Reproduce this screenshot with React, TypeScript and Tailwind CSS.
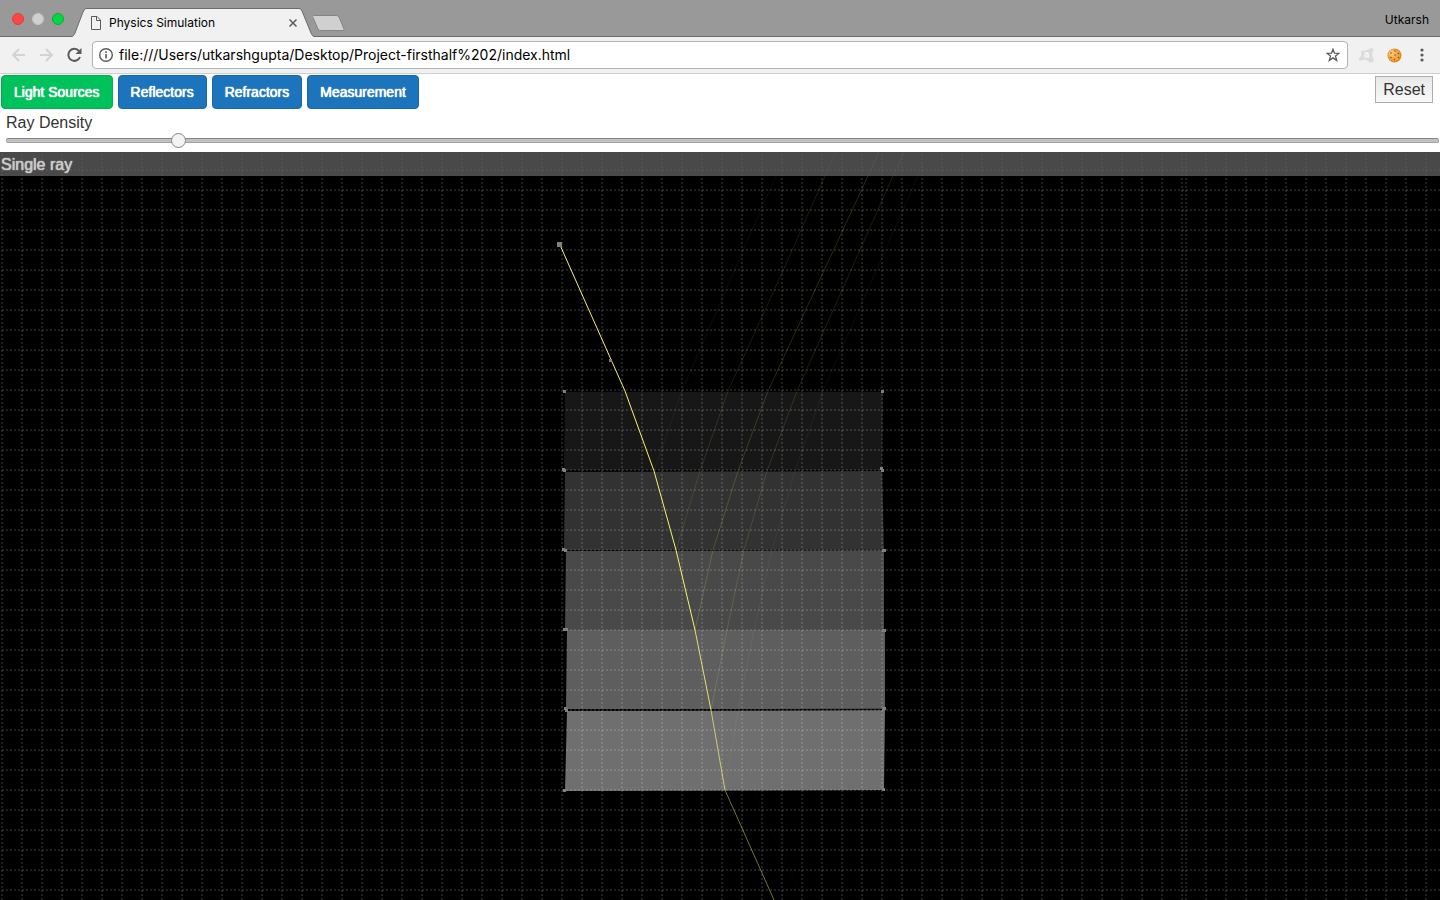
import { useState } from "react";

const GRID = 20;
const TILE = 1184;
const TOOLS = ["Light Sources", "Reflectors", "Refractors", "Measurement"];

const SLABS = [
  { points: "565,392 883,392 882,470 564,470", fill: "#171717" },
  { points: "565,472 882,471 884,550 564,550", fill: "#323232" },
  { points: "566,551 884,550 884,630 565,630", fill: "#494949" },
  { points: "567,630 885,630 885,709 566,709", fill: "#5e5e5e" },
  { points: "567,711 885,710 884,790 565,791", fill: "#6f6f6f" },
];

const RAYS = [
  { points: "560,245 625,391 654,471 676,550 695,630", color: "#ffff70", opacity: 0.95 },
  { points: "695,630 711,710", color: "#ffff70", opacity: 0.8 },
  { points: "711,710 725,790", color: "#ffff70", opacity: 0.65 },
  { points: "725,790 774,900 792,940", color: "#ffff70", opacity: 0.45 },
  { points: "654,471 682,391 740,257 776,176 787,152", color: "#ffff80", opacity: 0.05 },
  { points: "676,550 700,471 728,391 782,273 825,176 836,152", color: "#ffff80", opacity: 0.11 },
  { points: "695,630 713,550 738,471 768,391 868,176 879,152", color: "#ffff80", opacity: 0.16 },
  { points: "711,710 727,630 744,550 767,471 797,391 893,176 904,152", color: "#ffff80", opacity: 0.12 },
  { points: "725,790 738,710 754,630 772,550 795,471 823,391 918,176 929,152", color: "#ffff80", opacity: 0.05 },
  { points: "747,760 755,793 797,887", color: "#ffff80", opacity: 0.02 },
];

const HANDLES = [
  [563, 390], [881, 390], [562, 468], [563, 469], [880, 467], [881, 469],
  [562, 548], [564, 549], [882, 549], [883, 549], [563, 628], [565, 628],
  [882, 629], [883, 629], [564, 707], [565, 709], [883, 707], [882, 708],
  [563, 789], [882, 788], [609, 359],
];

function Bench() {
  const columns: number[] = [];
  for (let x = 2; x < 3840; x += 1) {
    if ((x % TILE) % GRID === 2) columns.push(x);
  }
  const rows = Array.from({ length: 100 }, (_, i) => 170 + i * GRID);
  return (
    <svg className="absolute inset-0 h-full w-full" role="img" aria-label="Light ray through stacked glass slabs">
      <g transform="translate(0 -152)">
        {SLABS.map((s) => (
          <polygon key={s.points} points={s.points} fill={s.fill} />
        ))}
        <g stroke="#000" strokeWidth="1">
          <line x1="566" x2="881" y1="470.500" y2="470.500" />
          <line x1="566" x2="882" y1="550.500" y2="550" strokeOpacity="0.6" />
          <line x1="567" x2="883" y1="710" y2="709.500" strokeWidth="1.500" />
        </g>
        <g stroke="#fff" strokeOpacity="0.13" strokeWidth="2" strokeDasharray="2 2">
          {columns.map((x) => (
            <line key={x} x1={x} x2={x} y1="154" y2="2160" />
          ))}
          {rows.map((y) => (
            <line key={y} x1="2" x2="3840" y1={y} y2={y} />
          ))}
        </g>
        <g fill="none">
          {RAYS.map((r) => (
            <polyline key={r.points} points={r.points} stroke={r.color} strokeOpacity={r.opacity} />
          ))}
        </g>
        <g fill="#808080">
          <rect x="557" y="242" width="5" height="5" />
          {HANDLES.map(([x, y]) => (
            <rect key={x + "-" + y} x={x} y={y} width="3" height="3" />
          ))}
        </g>
      </g>
    </svg>
  );
}

function TabStrip() {
  return (
    <header className="flex h-[37px] items-end border-b border-[#6c6c6c] bg-[#999]">
      <div className="flex h-full items-center gap-2 pt-px pl-3">
        <button aria-label="Close window" className="size-3 rounded-full border border-[#e33e3a] bg-[#fc4645]" />
        <button aria-label="Minimize window" className="size-3 rounded-full border border-[#c4c4c4] bg-[#d0d0d0]" />
        <button aria-label="Zoom window" className="size-3 rounded-full border border-[#12ac28] bg-[#00d742]" />
      </div>
      <div className="relative -mb-px ml-2 flex h-[29px] w-[242px] items-center pr-[17px] pl-[19px]">
        <svg className="absolute inset-0" width="242" height="29" viewBox="0 0 242 29" aria-hidden="true">
          <path d="M0 28.5 C1.5 28 2 27 3 25 L11 4 Q12.500 .5 14 .5 H227 Q229 .5 230 3 L239 25 Q240.500 28.500 242 28.500 V29 H0Z" fill="#f1f1f1" />
          <path d="M0 28.500 C1.500 28 2 27 3 25 L11 4 Q12.500 .5 14 .5 H227 Q229 .5 230 3 L239 25 Q240.500 28.500 242 28.500" fill="none" stroke="#6c6c6c" />
        </svg>
        <svg className="relative" width="10" height="14" viewBox="0 0 10 14" fill="none" stroke="#5a5a5a" aria-hidden="true">
          <path d="M.5 .5 H6 L9.500 4 V13.500 H.5Z M5.500 .5 V4.500 H9.500" />
        </svg>
        <span className="relative ml-2 flex-1 text-xs text-black">Physics Simulation</span>
        <button aria-label="Close tab" className="relative">
          <svg width="8" height="8" viewBox="0 0 8 8" stroke="#5a5a5a" strokeWidth="1.500" aria-hidden="true">
            <path d="M.5 .5 L7.500 7.500 M7.500 .5 L.5 7.500" />
          </svg>
        </button>
      </div>
      <button aria-label="New tab" className="-ml-px mb-1">
        <svg width="34" height="17" viewBox="0 0 34 17" aria-hidden="true">
          <path d="M1.500 .5 H24 Q26 .5 27 2 L32 14 Q32.500 15.500 31 15.500 H8.500 Q7 15.500 6 14 L.8 2 Q0 .5 1.500 .5Z" fill="#d0d0d0" stroke="#858585" transform="translate(-1 0)" />
        </svg>
      </button>
      <span className="mr-[11px] mb-2 ml-auto text-xs text-black">Utkarsh</span>
    </header>
  );
}

function Toolbar() {
  return (
    <nav className="flex h-[37px] items-center border-b border-[#cfcfcf] bg-[#f1f1f1] pl-[11px]">
      <button aria-label="Back" className="mr-3">
        <svg width="16" height="16" viewBox="0 0 16 16" fill="none" stroke="#d3d3d3" strokeWidth="2" aria-hidden="true">
          <path d="M14 8 H2 M8 2 L2 8 L8 14" />
        </svg>
      </button>
      <button aria-label="Forward" className="mr-3">
        <svg width="16" height="16" viewBox="0 0 16 16" fill="none" stroke="#d3d3d3" strokeWidth="2" aria-hidden="true">
          <path d="M1 8 H13 M7 2 L13 8 L7 14" />
        </svg>
      </button>
      <button aria-label="Reload" className="mr-[10px]">
        <svg width="15" height="16" viewBox="0 0 15 16" aria-hidden="true">
          <path d="M12 4 A6 6 0 1 0 13 10" fill="none" stroke="#5a5a5a" strokeWidth="2" />
          <path d="M14.500 1 V7 H8.500Z" fill="#5a5a5a" />
        </svg>
      </button>
      <div className="flex h-7 min-w-0 flex-1 items-center rounded-[4px] border border-[#b4b4b4] bg-white pr-[7px] pl-[6px]">
        <svg width="14" height="14" viewBox="0 0 14 14" fill="none" stroke="#5a5a5a" aria-hidden="true">
          <circle cx="7" cy="7" r="6.300" strokeWidth="1.400" />
          <path d="M7 6 V10.500 M7 3.300 V4.900" strokeWidth="1.600" />
        </svg>
        <input
          aria-label="Address"
          defaultValue="file:///Users/utkarshgupta/Desktop/Project-firsthalf%202/index.html"
          className="ml-[6px] min-w-0 flex-1 bg-transparent text-sm text-black outline-none"
        />
        <button aria-label="Bookmark this page">
          <svg width="14" height="14" viewBox="0 0 14 14" fill="none" stroke="#5a5a5a" strokeWidth="1.300" aria-hidden="true">
            <path d="M7 1.300 L8.500 5.200 L12.900 5.400 L9.500 8.100 L10.700 12.400 L7 9.900 L3.300 12.400 L4.500 8.100 L1.100 5.400 L5.500 5.200Z" />
          </svg>
        </button>
      </div>
      <button aria-label="Avast extension" className="ml-[10px]">
        <svg width="17" height="17" viewBox="0 0 17 17" aria-hidden="true">
          <path d="M4.500 3.500 Q9 4 12 1.500 Q15.500 0 15.500 3 Q13.500 6 14.500 10 Q17 12.500 15 15 Q12 17 10 14 Q7 12 3.500 13.500 Q0 14 .8 11.500 Q3 10 3.500 7.500 Q2 4 4.500 3.500Z" fill="#dcdcdc" />
          <path d="M6.500 6.500 Q9.800 4.800 10.300 7 V10.500 M10.300 8 Q6.500 7.500 6.500 9.200 Q7.500 11 10.300 9.300" fill="none" stroke="#f8f8f8" strokeWidth="1.300" />
        </svg>
      </button>
      <button aria-label="Cookies extension" className="ml-3">
        <svg width="15" height="15" viewBox="0 0 15 15" aria-hidden="true">
          <circle cx="7.500" cy="7.500" r="7" fill="#e08a28" />
          <circle cx="7" cy="7" r="6" fill="#f2a642" />
          <circle cx="5.500" cy="5.500" r="3.500" fill="#fbc268" />
          <g fill="#8a5020">
            <circle cx="4" cy="5" r=".8" />
            <circle cx="8" cy="3" r=".8" />
            <circle cx="8" cy="7" r=".8" />
            <circle cx="4" cy="9.500" r=".8" />
            <circle cx="11.500" cy="5.500" r=".8" />
            <circle cx="11.500" cy="9.500" r=".8" />
            <circle cx="7.500" cy="11.500" r=".8" />
          </g>
        </svg>
      </button>
      <button aria-label="Browser menu" className="mr-4 ml-[18px]">
        <svg width="4" height="14" viewBox="0 0 4 14" fill="#5a5a5a" aria-hidden="true">
          <circle cx="2" cy="2" r="1.600" />
          <circle cx="2" cy="7" r="1.600" />
          <circle cx="2" cy="12" r="1.600" />
        </svg>
      </button>
    </nav>
  );
}

export default function App() {
  const [active, setActive] = useState("Light Sources");
  const [density, setDensity] = useState(116);
  return (
    <div className="flex min-h-screen flex-col bg-white font-['Inter',sans-serif]">
      <TabStrip />
      <Toolbar />
      <main className="flex flex-1 flex-col font-['Liberation_Sans',Arial,sans-serif] text-[#333]">
        <div className="flex items-start justify-between pt-px pr-[7px] pl-px">
          <div className="flex gap-[5px]">
            {TOOLS.map((tool) => (
              <button
                key={tool}
                onClick={() => setActive(tool)}
                className={
                  "h-[34px] rounded-[4px] border px-3 text-sm text-white [text-shadow:0_0_1px_#fff,0_0_1px_#fff] " +
                  (tool === active ? "border-[#00ae4c] bg-[#00c25c]" : "border-[#1869a8] bg-[#1c75bc]")
                }
              >
                {tool}
              </button>
            ))}
          </div>
          <button className="mt-px h-[27px] border border-[#adadad] bg-linear-to-b from-[#e9e9e9] to-[#f8f8f8] px-[7px] text-base">
            Reset
          </button>
        </div>
        <div className="flex flex-col pt-[2px] pr-px pb-1 pl-[6px]">
          <label htmlFor="density" className="h-[22px] text-base leading-6">
            Ray Density
          </label>
          <input
            id="density"
            type="range"
            min="0"
            max="1000"
            value={density}
            onChange={(e) => setDensity(Number(e.target.value))}
            className="h-[15px] w-full appearance-none bg-transparent [&::-webkit-slider-runnable-track]:h-[5px] [&::-webkit-slider-runnable-track]:rounded-[2px] [&::-webkit-slider-runnable-track]:border [&::-webkit-slider-runnable-track]:border-[#a3a3a3] [&::-webkit-slider-runnable-track]:border-t-[#858585] [&::-webkit-slider-runnable-track]:bg-[#c2c2c2] [&::-webkit-slider-thumb]:-mt-[6px] [&::-webkit-slider-thumb]:size-[15px] [&::-webkit-slider-thumb]:appearance-none [&::-webkit-slider-thumb]:rounded-full [&::-webkit-slider-thumb]:border [&::-webkit-slider-thumb]:border-[#858585] [&::-webkit-slider-thumb]:bg-[#f3f3f3]"
          />
        </div>
        <section className="relative flex-1 bg-black">
          <Bench />
          <div className="relative h-6 bg-[#606060]/76 pl-px text-base leading-[26px] text-[#c9c9c9] [text-shadow:0_0_1px_#c9c9c9,0_0_1px_#c9c9c9]">
            Single ray
          </div>
        </section>
      </main>
    </div>
  );
}
